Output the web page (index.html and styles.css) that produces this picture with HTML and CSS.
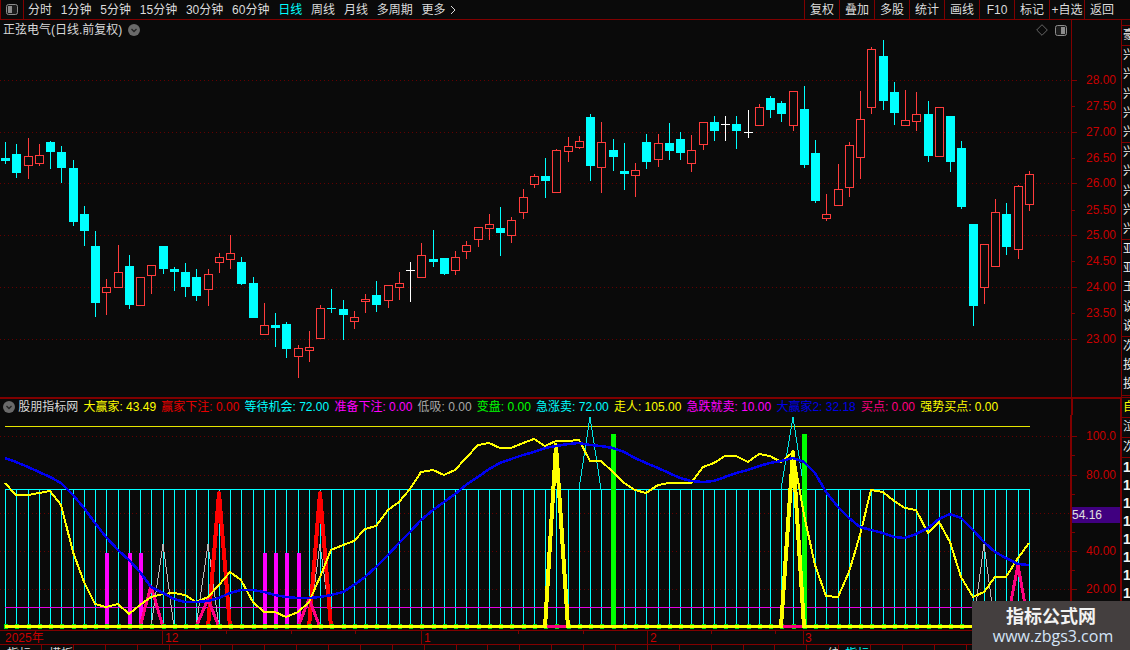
FILE: index.html
```html
<!DOCTYPE html>
<html lang="zh">
<head>
<meta charset="utf-8">
<title>正弦电气</title>
<link rel="stylesheet" href="styles.css">
</head>
<body>
<div class="app">
  <header class="topbar">
    <div class="layout-btn">
      <svg class="panel-icon" viewBox="0 0 12 11"><rect x="0.5" y="0.5" width="11" height="10" rx="2" class="panel-frame"/><rect x="2" y="2" width="4" height="7" class="panel-fill"/></svg>
    </div>
    <nav class="periods">
      <span>分时</span><span>1分钟</span><span>5分钟</span><span>15分钟</span><span>30分钟</span><span>60分钟</span><span class="active">日线</span><span>周线</span><span>月线</span><span>多周期</span><span class="more">更多<svg class="chevron" viewBox="0 0 6 10"><path d="M1 1l4 4-4 4"/></svg></span>
    </nav>
    <nav class="actions">
      <span>复权</span><span>叠加</span><span>多股</span><span>统计</span><span>画线</span><span>F10</span><span>标记</span><span>+自选</span><span class="last">返回</span>
    </nav>
  </header>
  <div class="workspace">
    <main class="charts">
      <section class="price-pane">
        <svg id="price" class="chart" width="1122" height="377" viewBox="0 20 1122 377"></svg>
        <div class="title">
          <span>正弦电气(日线.前复权)</span>
          <svg class="round-icon" viewBox="0 0 12 12"><circle cx="6" cy="6" r="6" class="round-bg"/><path d="M3.5 5l2.5 2.5L8.500 5" class="round-mark"/></svg>
        </div>
        <div class="pane-tools">
          <svg class="diamond" viewBox="0 0 12 12"><path d="M6 .7L11.300 6 6 11.300 .7 6z"/></svg>
          <svg class="panel-icon" viewBox="0 0 12 11"><rect x="0.5" y="0.5" width="11" height="10" rx="2" class="panel-frame"/><rect x="6" y="2" width="4" height="7" class="panel-fill"/></svg>
        </div>
      </section>
      <section class="legend">
        <div class="legend-items">
          <svg class="round-icon" viewBox="0 0 12 12"><circle cx="6" cy="6" r="6" class="round-bg"/><path d="M3.5 5l2.5 2.5L8.500 5" class="round-mark"/></svg>
          <span class="c-name">股朋指标网</span>
          <span class="c-yellow">大赢家: 43.49</span>
          <span class="c-red">赢家下注: 0.00</span>
          <span class="c-cyan">等待机会: 72.00</span>
          <span class="c-magenta">准备下注: 0.00</span>
          <span class="c-gray">低吸: 0.00</span>
          <span class="c-green">变盘: 0.00</span>
          <span class="c-cyan">急涨卖: 72.00</span>
          <span class="c-yellow">走人: 105.00</span>
          <span class="c-magenta">急跌就卖: 10.00</span>
          <span class="c-blue">大赢家2: 32.18</span>
          <span class="c-pink">买点: 0.00</span>
          <span class="c-yellow">强势买点: 0.00</span>
        </div>
        <div class="legend-axis"></div>
      </section>
      <section class="indicator-pane">
        <svg id="indicator" class="chart" width="1122" height="230" viewBox="0 415 1122 230"></svg>
      </section>
      <footer class="tabs" id="tabs"></footer>
    </main>
    <aside class="sidebar">
      <div class="side-group head"><div>豪</div></div>
      <div class="side-group"><div>兴</div><div>兴</div><div>兴</div><div>兴</div><div>兴</div></div>
      <div class="side-group"><div>兴</div><div>兴</div><div>兴</div><div>兴</div><div>兴</div></div>
      <div class="side-group"><div>亚</div><div>亚</div><div>王</div><div>说</div><div>说</div></div>
      <div class="side-group"><div>次</div><div>投</div><div>投</div></div>
      <div class="side-group pad"></div>
      <div class="side-cell c-yellow">自</div>
      <div class="side-cell">泣</div>
      <div class="side-cell">次</div>
      <div class="side-nums"><div>1</div><div>1</div><div>1</div><div>1</div><div>1</div><div>1</div><div>1</div><div>1</div></div>
    </aside>
  </div>
  <div class="watermark">
    <strong>指标公式网</strong>
    <span>www.zbgs3.com</span>
  </div>
</div>
<script src="chart.js"></script>
</body>
</html>
```
FILE: styles.css
```css
* { box-sizing: border-box; }
html, body { margin: 0; padding: 0; background: #0a0a0a; }
body {
  font: 12px/1 "Liberation Sans", "Noto Sans CJK SC", sans-serif;
  color: #dcdcdc;
}
.app {
  position: relative;
  width: 1130px;
  height: 650px;
  overflow: hidden;
  background: #0a0a0a;
}
.topbar {
  display: flex;
  height: 20px;
  border-bottom: 1px solid #800000;
  align-items: stretch;
}
.layout-btn {
  width: 24px;
  display: flex;
  align-items: center;
  justify-content: center;
  border-right: 1px solid #800000;
  border-left: 1px solid #800000;
}
.panel-icon { width: 12px; height: 11px; display: block; }
.panel-frame { fill: #1c1c1c; stroke: #8c8c8c; stroke-width: 1; }
.panel-fill { fill: #8c8c8c; }
.periods {
  display: flex;
  gap: 8.8px;
  padding-left: 4px;
  align-items: center;
  flex: 1;
}
.periods .active { color: #00ffff; }
.more { display: flex; align-items: center; gap: 4px; }
.chevron { width: 6px; height: 10px; display: block; }
.chevron path { fill: none; stroke: #dcdcdc; stroke-width: 1; }
.actions { display: flex; align-items: stretch; }
.actions span {
  width: 35px;
  display: flex;
  align-items: center;
  justify-content: center;
  border-left: 1px solid #800000;
}
.actions .last { width: 46px; padding-right: 11px; }
.workspace { display: flex; height: 630px; }
.charts { width: 1122px; flex: none; display: flex; flex-direction: column; }
.chart { display: block; shape-rendering: crispEdges; }
.chart text { shape-rendering: auto; }
.price-pane { position: relative; height: 377px; }
.title {
  position: absolute;
  left: 3px;
  top: 3px;
  display: flex;
  align-items: center;
  gap: 6px;
  height: 13px;
  color: #d8d8d8;
}
.round-icon { width: 12px; height: 12px; display: block; flex: none; }
.round-bg { fill: #6a6a6a; }
.round-mark { fill: none; stroke: #222; stroke-width: 1.3; }
.pane-tools {
  position: absolute;
  left: 1036px;
  top: 4px;
  display: flex;
  align-items: center;
  gap: 7px;
}
.diamond { width: 12px; height: 12px; display: block; }
.diamond path { fill: none; stroke: #666; stroke-width: 1; }
.legend {
  display: flex;
  height: 18px;
  border-top: 2px solid #800000;
}
.legend-items {
  width: 1071px;
  display: flex;
  align-items: center;
  gap: 5.2px;
  padding-left: 3px;
  white-space: nowrap;
  overflow: hidden;
}
.legend-axis {
  width: 51px;
  border-left: 2px solid #800000;
  border-right: 2px solid #800000;
}
.c-name { color: #d8d8d8; margin-left: -2px; }
.c-yellow { color: #ffff00; }
.c-red { color: #e60000; }
.c-cyan { color: #00ffff; }
.c-magenta { color: #ff00ff; }
.c-gray { color: #a8a8a8; }
.c-green { color: #00ff00; }
.c-blue { color: #0000e6; }
.c-pink { color: #ff0080; }
.indicator-pane { height: 229px; }
.tabs {
  display: flex;
  height: 6px;
  border-top: 1px solid #800000;
  overflow: hidden;
}
.tab {
  width: 31.9px;
  flex: none;
  height: 16px;
  padding: 3px 0 0 7px;
  border-right: 1px solid #800000;
  white-space: nowrap;
  overflow: hidden;
}
.tab.first { width: 42px; padding-left: 7px; }
.tab.on { color: #00ffff; padding-left: 6px; }
.tab.tail { padding-left: 20px; }
.sidebar {
  width: 8px;
  flex: none;
  overflow: hidden;
  color: #eee;
  display: flex;
  flex-direction: column;
  padding-top: 5px;
  white-space: nowrap;
}
.side-group { border-bottom: 1px solid #800000; flex: none; }
.side-group div { height: 19.2px; line-height: 19px; padding-left: 1px; width: 16px; }
.side-group.head { border-top: 1px solid #800000; }
.side-group.pad { height: 2px; }
.side-cell { height: 20px; line-height: 19px; padding-left: 1px; width: 16px; border-bottom: 1px solid #800000; flex: none; }
.side-nums div { height: 18px; line-height: 18px; padding-left: 1px; font-size: 14px; font-weight: 700; color: #f4f4f4; }
.watermark {
  position: absolute;
  left: 972px;
  top: 601px;
  width: 158px;
  height: 49px;
  background: #443f3f;
  display: flex;
  flex-direction: column;
  align-items: center;
  padding-top: 4px;
  gap: 3px;
}
.watermark strong {
  font: 700 18px/20px "Noto Sans CJK SC", sans-serif;
  color: #f2f2f2;
}
.watermark span {
  font: 16px/16px "Open Sans", sans-serif;
  color: #d4e4f7;
  padding-left: 4px;
}
```
FILE: chart.js
```js
var NS = "http://www.w3.org/2000/svg";
var UP = "#ff3c3c", DOWN = "#00ffff", FLAT = "#ffffff", BG = "#0a0a0a";
var AXIS = "#800000", LABEL = "#c80000", GRID = "#640000";

function X(i) { return Math.round(5.2 + 11.25 * i); }

function el(parent, tag, attrs, text) {
  var n = document.createElementNS(NS, tag);
  for (var k in attrs) n.setAttribute(k, attrs[k]);
  if (text !== undefined) n.textContent = text;
  parent.appendChild(n);
  return n;
}
function line(p, x1, y1, x2, y2, color, w, dash) {
  var a = { x1: x1, y1: y1, x2: x2, y2: y2, stroke: color, "stroke-width": w || 1 };
  if (dash) a["stroke-dasharray"] = dash;
  return el(p, "line", a);
}
function rect(p, x, y, w, h, fill) {
  return el(p, "rect", { x: x, y: y, width: w, height: h, fill: fill });
}
function poly(p, pts, color, w) {
  return el(p, "polyline", {
    points: pts.map(function (q) { return q[0] + "," + q[1]; }).join(" "),
    fill: "none", stroke: color, "stroke-width": w, "stroke-linejoin": "round"
  });
}
function label(p, x, y, s, color) {
  return el(p, "text", { x: x, y: y, fill: color || LABEL, "font-size": 12, "dominant-baseline": "middle" }, s);
}

/* high, body top, body bottom, low, kind */
var candles = [
[142,158,161,164,"c"],[144,154,173,178,"c"],[138,156,165,179,"r"],[144,155,163,166,"r"],[141,142,152,169,"c"],
[146,152,168,183,"c"],[160,168,222,226,"c"],[206,214,231,246,"c"],[231,246,303,317,"c"],[279,287,292,315,"r"],
[245,272,287,287,"r"],[255,266,305,309,"c"],[277,277,305,305,"r"],[265,265,275,294,"r"],[246,246,269,274,"c"],
[267,269,272,291,"c"],[263,272,287,297,"c"],[269,277,296,301,"c"],[269,274,289,306,"r"],[253,257,262,273,"r"],
[235,253,259,269,"r"],[257,262,284,285,"c"],[277,283,318,318,"c"],[303,325,334,334,"r"],[313,325,328,347,"c"],
[322,324,349,358,"c"],[345,348,356,378,"r"],[331,347,350,362,"r"],[305,308,338,339,"r"],[289,308,309,313,"c"],
[300,309,315,340,"c"],[311,317,321,329,"r"],[294,299,301,313,"r"],[281,295,305,312,"c"],[285,285,300,308,"r"],
[272,283,287,300,"r"],[262,270,270,302,"w"],[243,255,277,277,"r"],[230,259,262,267,"c"],[258,258,274,275,"c"],
[251,257,270,275,"r"],[241,245,251,259,"r"],[227,227,239,247,"r"],[214,224,228,240,"r"],[207,228,233,256,"c"],
[217,220,235,243,"r"],[189,197,212,219,"r"],[174,176,184,188,"r"],[158,176,181,198,"c"],[149,150,192,192,"r"],
[137,146,151,162,"r"],[136,141,147,149,"r"],[114,117,166,181,"c"],[122,142,167,193,"r"],[139,150,157,171,"c"],
[143,171,174,190,"c"],[163,170,175,197,"r"],[134,142,162,169,"c"],[134,143,159,167,"r"],[123,143,151,160,"c"],
[132,139,153,160,"c"],[135,150,163,172,"r"],[122,122,144,150,"r"],[116,122,131,141,"c"],[116,124,124,141,"w"],
[116,124,131,149,"c"],[110,132,132,138,"w"],[104,107,125,125,"r"],[96,98,110,118,"c"],[101,103,114,122,"c"],
[91,91,125,131,"r"],[86,109,165,168,"c"],[140,153,201,203,"c"],[194,214,218,221,"r"],[164,189,205,205,"r"],
[142,145,187,197,"r"],[91,119,157,179,"r"],[47,49,107,114,"r"],[40,56,101,110,"c"],[82,92,113,125,"c"],
[90,120,125,125,"r"],[92,114,121,131,"r"],[101,114,156,162,"c"],[107,107,156,156,"r"],[116,116,162,172,"c"],
[141,148,207,209,"c"],[224,224,306,326,"c"],[244,244,287,304,"r"],[199,212,266,266,"r"],[203,214,247,255,"c"],
[185,186,249,259,"r"],[171,174,204,211,"r"]
];

var price = document.getElementById("price");
[80, 132, 183, 235, 287, 339].forEach(function (y) {
  line(price, 0, y + .5, 1071, y + .5, GRID, 1, "1 3");
});
candles.forEach(function (c, i) {
  var x = X(i), col = c[4] === "r" ? UP : c[4] === "c" ? DOWN : FLAT;
  if (c[0] < c[1]) rect(price, x, c[0], 1, c[1] - c[0], col);
  if (c[3] > c[2]) rect(price, x, c[2], 1, c[3] - c[2], col);
  if (c[4] === "w") { rect(price, x - 4, c[1], 9, 1, col); return; }
  if (c[4] === "c") { rect(price, x - 4, c[1], 9, Math.max(c[2] - c[1], 1), col); return; }
  rect(price, x - 4, c[1], 9, c[2] - c[1] + 1, col);
  rect(price, x - 3, c[1] + 1, 7, c[2] - c[1] - 1, BG);
});
/* price axis */
line(price, 1071.5, 20, 1071.5, 397, AXIS, 1);
rect(price, 1121, 20, 1, 377, AXIS);
[["28.00",80,1],["27.50",106,0],["27.00",132,1],["26.50",158,0],["26.00",183,1],["25.50",210,0],
 ["25.00",235,1],["24.50",261,0],["24.00",287,1],["23.50",313,0],["23.00",339,1]].forEach(function (t) {
  line(price, 1071, t[1] + .5, t[2] ? 1077 : 1075, t[1] + .5, AXIS, 1);
  label(price, 1086, t[1] + 1, t[0]);
});

/* indicator */
var yLine = [483,495,495,493,491,505,552,582,604,607,604,614,605,597,594,593,595,602,597,585,572,580,602,612,612,617,612,602,577,550,545,541,529,526,510,502,489,472,470,475,470,458,445,443,448,448,443,439,446,441,441,440,461,461,472,483,490,493,485,483,483,483,467,463,456,456,462,454,456,462,452,515,565,596,597,572,535,490,492,501,508,510,533,522,542,577,597,592,577,577,558,543];
var bLine = [458,462,467,472,477,483,495,508,523,537,550,560,572,587,593,599,602,602,601,598,593,590,590,592,595,597,598,598,597,595,592,585,577,567,555,543,532,520,510,502,494,485,477,469,463,459,455,452,448,446,444,443,445,446,448,452,458,463,468,473,478,481,482,481,477,473,470,466,463,461,458,462,473,492,507,518,527,530,533,537,538,534,528,519,514,518,530,542,552,558,564,565];
var Z = 627;
var ind = document.getElementById("indicator");

function tri(i, peak, color, w, base) {
  var b = base || Z;
  poly(ind, [[X(i - 1), b], [X(i), peak], [X(i + 1), b]], color, w);
}

[436, 475, 513, 551, 589].forEach(function (y) {
  line(ind, 0, y + .5, 1071, y + .5, GRID, 1, "1 3");
});
line(ind, 5, 426.5, 1030, 426.5, "#e6e600", 1);

tri(52, 417, "#00e6e6", 1, 489);
tri(70, 417, "#00e6e6", 1, 489);
candles.forEach(function (c, i) {
  rect(ind, X(i), 489, 1, Z - 489, "#00ffff");
});
rect(ind, X(0), 489, X(91) - X(0) + 1, 1, "#00ffff");
line(ind, 5, 607.500, 1030, 607.5, "#e600e6", 1);

[14, 18, 28, 87].forEach(function (i) { tri(i, 544, "#b8b8b8", 1); });
[9, 11, 12, 23, 24, 25, 26].forEach(function (i) { rect(ind, X(i) - 1, 553, 4, Z - 553, "#ff00ff"); });
[54, 71].forEach(function (i) { rect(ind, X(i) - 2, 434, 5, Z - 434, "#00ff00"); });
tri(19, 493, "#ff0000", 4);
tri(28, 493, "#ff0000", 4);
[13, 18, 27].forEach(function (i) { tri(i, i === 13 ? 586 : 599, "#ff0080", 3); });
tri(90, 565, "#ff0080", 3);

poly(ind, yLine.map(function (y, i) { return [X(i), y]; }), "#ffff00", 2);

candles.forEach(function (c, i) { rect(ind, X(i) - 1, 624, 4, 5, "#00e600"); });
rect(ind, X(0), 625, X(91) - X(0), 3, "#ffff00");
rect(ind, X(48) + 2, 625, X(50) - X(48) - 4, 3, "#ff0080");
rect(ind, X(69) + 2, 625, X(71) - X(69) - 4, 3, "#ff0080");
tri(49, 445, "#ffff00", 4);
tri(70, 452, "#ffff00", 4);

poly(ind, bLine.map(function (y, i) { return [X(i), y]; }), "#0000f0", 2.5);

/* indicator axis */
rect(ind, 1070, 415, 2, 230, AXIS);
rect(ind, 1120, 415, 2, 230, AXIS);
[["100.0",436],["80.00",475],["40.00",551],["20.00",589]].forEach(function (t) {
  line(ind, 1071, t[1] + .5, 1077, t[1] + .5, AXIS, 1);
  label(ind, 1086, t[1] + 1, t[0]);
});
[455, 494, 532, 570, 608].forEach(function (y) { line(ind, 1071, y + .5, 1075, y + .5, AXIS, 1); });
rect(ind, 1072, 507, 48, 16, "#400080");
label(ind, 1072, 515.5, "54.16", "#e0e0e0");

/* time axis */
line(ind, 0, 630.5, 1071, 630.5, AXIS, 1);
[[162,"12",3],[421,"1",3],[647,"2",3],[803,"3",2]].forEach(function (t) {
  line(ind, t[0] + .5, 630, t[0] + .5, 645, AXIS, 1);
  label(ind, t[0] + t[2], 639, t[1]);
});
label(ind, 5, 639, "2025年");
[226, 291, 355, 518, 583, 711, 775].forEach(function (x) { line(ind, x + .5, 630, x + .5, 634, AXIS, 1); });

/* bottom tab strip, cut by the window edge */
var tabs = document.getElementById("tabs");
var names = { 0: "指标", 1: "模板", 25: "统", 26: "指标" };
for (var t = 0; t < 34; t++) {
  var s = document.createElement("span");
  s.className = "tab" + (t === 0 ? " first" : "") + (t === 25 ? " tail" : "") + (t === 26 ? " on" : "");
  s.textContent = names[t] || "";
  tabs.appendChild(s);
}
```
